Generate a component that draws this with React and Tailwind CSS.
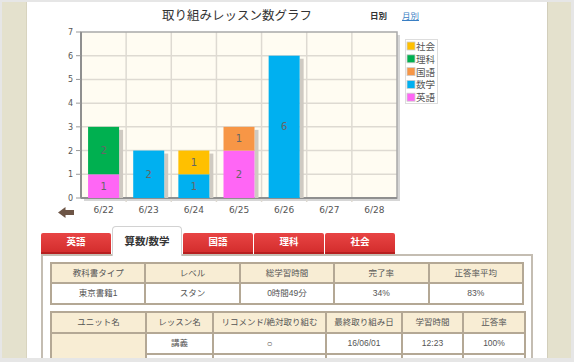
import React from 'react';

const PINK = '#ff66f5';
const GREEN = '#00b050';
const BLUE = '#00b0f0';
const ORANGE = '#f79646';
const YELLOW = '#ffc000';

const days = [
  { d: '6/22', s: [{ c: PINK, v: 1 }, { c: GREEN, v: 2 }] },
  { d: '6/23', s: [{ c: BLUE, v: 2 }] },
  { d: '6/24', s: [{ c: BLUE, v: 1 }, { c: YELLOW, v: 1 }] },
  { d: '6/25', s: [{ c: PINK, v: 2 }, { c: ORANGE, v: 1 }] },
  { d: '6/26', s: [{ c: BLUE, v: 6 }] },
  { d: '6/27', s: [] },
  { d: '6/28', s: [] },
];

const legend = [
  { t: '社会', c: YELLOW },
  { t: '理科', c: GREEN },
  { t: '国語', c: ORANGE },
  { t: '数学', c: BLUE },
  { t: '英語', c: PINK },
];

// plot box in svg coords
const X0 = 54;
const X1 = 370;
const Y0 = 2;
const Y1 = 168;
const UNIT = (Y1 - Y0) / 7;
const COL = (X1 - X0) / 7;
const FONT = 'DejaVu Sans, Noto Sans CJK JP, sans-serif';

function Chart() {
  return (
    <svg width="520" height="196" className="block overflow-visible">
      {/* plot shadow */}
      <rect x={X0 + 3} y={Y0 + 3} width={X1 - X0} height={Y1 - Y0} fill="#d6d6d6" />
      <rect x={X0} y={Y0} width={X1 - X0} height={Y1 - Y0} fill="#fffcf2" />
      {[1, 2, 3, 4, 5, 6].map((i) => (
        <line key={'v' + i} x1={X0 + i * COL} x2={X0 + i * COL} y1={Y0} y2={Y1 + 4} stroke="#dedad2" strokeWidth="1.5" />
      ))}
      {[1, 2, 3, 4, 5, 6].map((v) => (
        <line key={'h' + v} x1={X0} x2={X1} y1={Y1 - v * UNIT} y2={Y1 - v * UNIT} stroke="#dedad2" strokeWidth="1.5" />
      ))}
      <rect x={X0} y={Y0} width={X1 - X0} height={Y1 - Y0} fill="none" stroke="#a9a9a9" strokeWidth="1.5" />
      <line x1={X0} x2={X0} y1={Y0} y2={Y1} stroke="#8f8f8f" strokeWidth="2" />
      <line x1={X0} x2={X1} y1={Y1} y2={Y1} stroke="#8f8f8f" strokeWidth="2" />

      {[0, 1, 2, 3, 4, 5, 6, 7].map((v) => (
        <g key={'y' + v}>
          <line x1={X0 - 5} x2={X0} y1={Y1 - v * UNIT} y2={Y1 - v * UNIT} stroke="#999" strokeWidth="1" />
          <text x={X0 - 8} y={Y1 - v * UNIT + 3} fontSize="8" fill="#555" textAnchor="end" fontFamily={FONT}>
            {v}
          </text>
        </g>
      ))}

      {days.map((day, i) => {
        const cx = X0 + COL * (i + 0.5);
        const bx = cx - 15.5;
        let acc = 0;
        const total = day.s.reduce((a, b) => a + b.v, 0);
        return (
          <g key={day.d}>
            {total > 0 && (
              <rect x={bx + 31} y={Y1 - total * UNIT + 3} width="4" height={total * UNIT - 3} fill="#cfcac2" />
            )}
            {day.s.map((seg, k) => {
              const top = Y1 - (acc + seg.v) * UNIT;
              const h = seg.v * UNIT;
              acc += seg.v;
              return (
                <g key={k}>
                  <rect x={bx} y={top} width="31" height={h} fill={seg.c} />
                  <text x={cx} y={top + h / 2 + 3.5} fontSize="10" fill="#666" textAnchor="middle" fontFamily={FONT}>
                    {seg.v}
                  </text>
                </g>
              );
            })}
            <text x={cx} y={183} fontSize="9" fill="#555" textAnchor="middle" fontFamily={FONT}>
              {day.d}
            </text>
          </g>
        );
      })}

      {/* legend */}
      <rect x="378.5" y="9.5" width="32" height="64" fill="#fff" stroke="#ddd" />
      {legend.map((l, i) => (
        <g key={l.t}>
          <rect x="380" y={12 + i * 12.8} width="8" height="8" fill={l.c} stroke="#ccc" strokeWidth="0.8" />
          <text x="389" y={20 + i * 12.8} fontSize="9.5" fill="#555" fontFamily={FONT}>
            {l.t}
          </text>
        </g>
      ))}

      {/* back arrow */}
      <polygon points="31,182.5 38.5,177 38.5,188" fill="#6d5546" />
      <rect x="38" y="180" width="9" height="5" fill="#6d5546" />
    </svg>
  );
}

const cell = 'border-2 border-[#b4a895] h-[20px] text-center font-normal text-[#555] align-middle';
const head = cell + ' bg-[#f8edd4]';

export default function App() {
  const tabs = ['英語', '算数/数学', '国語', '理科', '社会'];

  return (
    <div className="w-[574px] h-[362px] bg-[#e6e6e6] pt-[2px] pl-[2px] pr-[3px] pb-[4px] font-['Liberation_Sans','Noto_Sans_CJK_JP',sans-serif]">
      <div className="flex h-full overflow-hidden">
        <div className="w-[25px] bg-[#e4e1cd] border-r border-[#d8d4bf]" />

        <main className="w-[520px] bg-white">
          {/* Chart header */}
          <div className="flex items-center h-[28px]">
            <h2 className="ml-[110px] w-[200px] text-center text-[12.5px] text-[#333]">取り組みレッスン数グラフ</h2>
            <span className="ml-[33px] text-[8.5px] font-bold text-[#333]">日別</span>
            <a href="#" className="ml-[15px] text-[8.5px] text-[#3a7fc4] underline">
              月別
            </a>
          </div>

          <Chart />

          {/* Tabs */}
          <div className="flex items-end gap-px ml-[14px] h-[28px]">
            {tabs.map((t) =>
              t === '算数/数学' ? (
                <div
                  key={t}
                  className="relative z-10 w-[70px] h-[30px] -mb-[2px] bg-white border border-b-0 border-[#d2d2d2] rounded-t-[4px] flex items-center justify-center text-[10.5px] font-bold text-[#333]"
                >
                  {t}
                </div>
              ) : (
                <div
                  key={t}
                  className="w-[70px] h-[21px] bg-gradient-to-b from-[#e84444] to-[#d42d2d] border-b-2 border-[#b71f1f] rounded-t-[2px] flex items-center justify-center text-[9.5px] font-bold text-white"
                >
                  {t}
                </div>
              )
            )}
          </div>

          {/* Tab content */}
          <div className="mx-[14px] border-2 border-[#c4bdb2] px-[7px] pt-[6px] h-[120px]">
            <table className="w-full table-fixed border-collapse text-[8.5px]">
              <thead>
                <tr>
                  <th className={head}>教科書タイプ</th>
                  <th className={head}>レベル</th>
                  <th className={head}>総学習時間</th>
                  <th className={head}>完了率</th>
                  <th className={head}>正答率平均</th>
                </tr>
              </thead>
              <tbody>
                <tr>
                  <td className={cell + ' h-[21px]'}>東京書籍1</td>
                  <td className={cell}>スタン</td>
                  <td className={cell}>0時間49分</td>
                  <td className={cell}>34%</td>
                  <td className={cell}>83%</td>
                </tr>
              </tbody>
            </table>

            <table className="w-full table-fixed border-collapse text-[8.5px] mt-[6px]">
              <colgroup>
                <col className="w-[95px]" />
                <col className="w-[67px]" />
                <col className="w-[113px]" />
                <col className="w-[76px]" />
                <col className="w-[61px]" />
                <col className="w-[62px]" />
              </colgroup>
              <thead>
                <tr>
                  <th className={head + ' h-[21px]'}>ユニット名</th>
                  <th className={head}>レッスン名</th>
                  <th className={head}>リコメンド/絶対取り組む</th>
                  <th className={head}>最終取り組み日</th>
                  <th className={head}>学習時間</th>
                  <th className={head}>正答率</th>
                </tr>
              </thead>
              <tbody>
                <tr>
                  <td rowSpan={3} className={head}>1.次関数の式</td>
                  <td className={cell + ' h-[21px]'}>講義</td>
                  <td className={cell + ' text-[10px]'}>○</td>
                  <td className={cell}>16/06/01</td>
                  <td className={cell}>12:23</td>
                  <td className={cell}>100%</td>
                </tr>
                <tr>
                  <td className={cell + ' h-[21px]'}>演習</td>
                  <td className={cell + ' text-[10px]'}>○</td>
                  <td className={cell}>16/06/01</td>
                  <td className={cell}>10:05</td>
                  <td className={cell}>80%</td>
                </tr>
                <tr>
                  <td className={cell + ' h-[21px]'}>確認</td>
                  <td className={cell + ' text-[10px]'}>○</td>
                  <td className={cell}>16/06/02</td>
                  <td className={cell}>08:41</td>
                  <td className={cell}>75%</td>
                </tr>
              </tbody>
            </table>
          </div>
        </main>

        <div className="flex-1 bg-[#e4e1cd] border-l border-[#d2cebb]" />
      </div>
    </div>
  );
}
